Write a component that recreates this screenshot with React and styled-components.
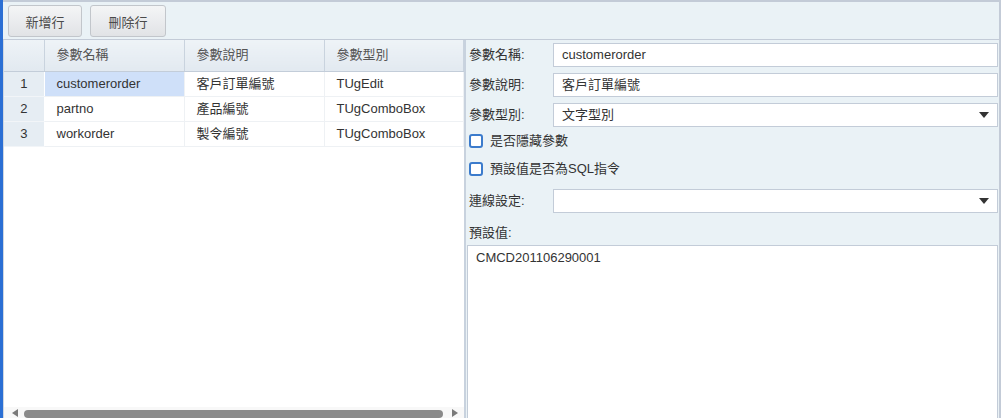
import React from "react";
import styled, { createGlobalStyle } from "styled-components";

const GlobalStyle = createGlobalStyle`
  html, body { margin: 0; padding: 0; background: #ffffff; }
  body {
    font-family: "Liberation Sans", "Noto Sans CJK TC", Arial, sans-serif;
    font-size: 13px;
    line-height: 18px;
    color: #333;
  }
`;

const params = [
  { id: 1, name: "customerorder", desc: "客戶訂單編號", type: "TUgEdit" },
  { id: 2, name: "partno", desc: "產品編號", type: "TUgComboBox" },
  { id: 3, name: "workorder", desc: "製令編號", type: "TUgComboBox" },
];

function ArrowDown() {
  return (
    <svg width="10" height="6" viewBox="0 0 10 6">
      <path d="M0 0 L10 0 L5 6 Z" fill="#333" />
    </svg>
  );
}

function Select({ value }) {
  return (
    <SelectBox>
      <span>{value}</span>
      <ArrowDown />
    </SelectBox>
  );
}

export default function App() {
  return (
    <Frame>
      <GlobalStyle />
      <BlueEdge />
      <Main>
        <Toolbar>
          <ToolButton $width={74}>新增行</ToolButton>
          <ToolButton $width={76}>刪除行</ToolButton>
        </Toolbar>
        <Body>
          <GridPanel>
            <Table>
              <thead>
                <tr>
                  <HeadCell $width={40} />
                  <HeadCell $width={140}>參數名稱</HeadCell>
                  <HeadCell $width={140}>參數說明</HeadCell>
                  <HeadCell $width={139}>參數型別</HeadCell>
                </tr>
              </thead>
              <tbody>
                {params.map((p) => (
                  <tr key={p.id}>
                    <NumCell>{p.id}</NumCell>
                    <Cell $selected={p.id === 1}>{p.name}</Cell>
                    <Cell>{p.desc}</Cell>
                    <Cell>{p.type}</Cell>
                  </tr>
                ))}
              </tbody>
            </Table>
            <Spacer />
            <ScrollBar>
              <ScrollArrow $dir="left" />
              <Thumb />
              <ScrollArrow $dir="right" />
            </ScrollBar>
          </GridPanel>
          <FormPanel>
            <FieldRow>
              <Label>參數名稱:</Label>
              <Input>customerorder</Input>
            </FieldRow>
            <FieldRow $top={6}>
              <Label>參數說明:</Label>
              <Input>客戶訂單編號</Input>
            </FieldRow>
            <FieldRow $top={6}>
              <Label>參數型別:</Label>
              <Select value="文字型別" />
            </FieldRow>
            <CheckRow $top={5}>
              <CheckBox />
              <span>是否隱藏參數</span>
            </CheckRow>
            <CheckRow $top={10}>
              <CheckBox />
              <span>預設值是否為SQL指令</span>
            </CheckRow>
            <FieldRow $top={11}>
              <Label>連線設定:</Label>
              <Select value="" />
            </FieldRow>
            <PlainLabel>預設值:</PlainLabel>
            <TextArea>CMCD201106290001</TextArea>
          </FormPanel>
        </Body>
      </Main>
    </Frame>
  );
}

const Frame = styled.div`
  width: 1001px;
  height: 418px;
  display: flex;
  overflow: hidden;
  background: #eaf2f6;
`;

const BlueEdge = styled.div`
  width: 3px;
  flex: none;
  background: #2b6fd4;
`;

const Main = styled.div`
  flex: 1;
  display: flex;
  flex-direction: column;
  border-top: 2px solid #c3cbd7;
  border-right: 2px solid #c3cbd7;
  min-width: 0;
`;

const Toolbar = styled.div`
  height: 38px;
  flex: none;
  display: flex;
  align-items: flex-start;
  gap: 8px;
  padding: 3px 5px 0;
  box-sizing: border-box;
  background: #eaf2f6;
  border-bottom: 1px solid #c3cbd7;
`;

const ToolButton = styled.button`
  width: ${(p) => p.$width}px;
  height: 32px;
  font-family: inherit;
  font-size: 13px;
  color: #4a4a4a;
  background: linear-gradient(#f4f5f6, #e1e3e6);
  border: 1px solid #c2c6cb;
  border-radius: 3px;
  padding: 0;
`;

const Body = styled.div`
  flex: 1;
  display: flex;
  min-height: 0;
`;

const GridPanel = styled.div`
  width: 460px;
  flex: none;
  display: flex;
  flex-direction: column;
  background: #ffffff;
  border-left: 1px solid #d0d7e0;
  border-right: 2px solid #c8d2de;
`;

const Table = styled.table`
  border-collapse: collapse;
  table-layout: fixed;
  width: 459px;
`;

const HeadCell = styled.th`
  width: ${(p) => p.$width}px;
  height: 31px;
  padding: 0 0 0 12px;
  box-sizing: border-box;
  text-align: left;
  font-weight: normal;
  color: #555;
  background: linear-gradient(#eef3f7, #e2e9f0);
  border-right: 1px solid #c9d3de;
  border-bottom: 1px solid #c3cdd9;
`;

const NumCell = styled.td`
  height: 24px;
  padding: 0;
  text-align: center;
  background: #e6edf3;
  border-bottom: 1px solid #f2f5f8;
  border-right: 1px solid #ffffff;
  color: #333;
`;

const Cell = styled.td`
  height: 24px;
  padding: 0 0 0 12px;
  box-sizing: border-box;
  white-space: nowrap;
  overflow: hidden;
  color: #333;
  background: ${(p) => (p.$selected ? "#cfe0f9" : "transparent")};
  border-bottom: 1px solid #eef1f4;
  border-right: 1px solid #eef1f4;
`;

const Spacer = styled.div`
  flex: 1;
`;

const ScrollBar = styled.div`
  height: 11px;
  flex: none;
  display: flex;
  align-items: center;
  padding: 0 0 0 8px;
  background: #f8f8f8;
`;

const ScrollArrow = styled.div`
  width: 0;
  height: 0;
  border-top: 4px solid transparent;
  border-bottom: 4px solid transparent;
  ${(p) =>
    p.$dir === "left"
      ? "border-right: 6px solid #7a7a7a; margin-right: 6px;"
      : "border-left: 6px solid #7a7a7a; margin-left: 9px;"}
`;

const Thumb = styled.div`
  width: 419px;
  height: 8px;
  margin-top: 2px;
  border-radius: 4px;
  background: #8a8a8a;
`;

const FormPanel = styled.div`
  flex: 1;
  display: flex;
  flex-direction: column;
  padding: 3px 1px 0 3px;
  background: #eaf2f6;
  min-width: 0;
`;

const FieldRow = styled.div`
  display: flex;
  align-items: center;
  flex: none;
  margin-top: ${(p) => p.$top || 0}px;
`;

const Label = styled.div`
  width: 84px;
  flex: none;
  color: #333;
`;

const Input = styled.div`
  flex: 1;
  height: 24px;
  box-sizing: border-box;
  padding: 0 8px;
  display: flex;
  align-items: center;
  background: #ffffff;
  border: 1px solid #c3ccd8;
  color: #333;
`;

const SelectBox = styled(Input)`
  justify-content: space-between;
  padding-right: 8px;
`;

const CheckRow = styled.div`
  display: flex;
  align-items: center;
  flex: none;
  height: 18px;
  gap: 7px;
  margin-top: ${(p) => p.$top}px;
  color: #333;
`;

const CheckBox = styled.div`
  width: 14px;
  height: 14px;
  box-sizing: border-box;
  border: 2px solid #3b7bcc;
  border-radius: 3px;
  background: #ffffff;
`;

const PlainLabel = styled.div`
  height: 18px;
  flex: none;
  margin-top: 11px;
  color: #333;
`;

const TextArea = styled.div`
  flex: 1;
  margin: 3px 0 0 -2px;
  box-sizing: border-box;
  padding: 3px 8px;
  background: #ffffff;
  border: 1px solid #c3ccd8;
  border-bottom: none;
  color: #333;
`;
